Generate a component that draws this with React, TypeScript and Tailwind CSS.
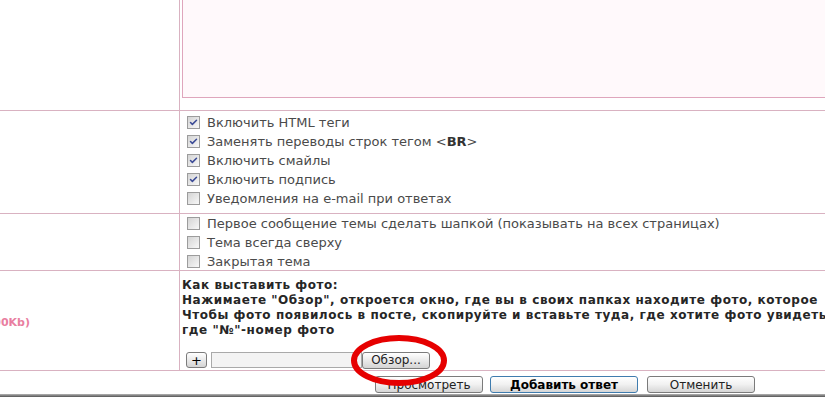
import { Check } from 'lucide-react';

const line = 'border-[#d9b2c1]';

function Box({ checked }: { checked: boolean }) {
  return (
    <span className="w-[13px] h-[13px] border border-[#9c9c9c] bg-gradient-to-br from-[#d4d4d4] to-[#f8f8f8] flex items-center justify-center shrink-0">
      {checked && <Check className="w-[9px] h-[9px] text-[#3a4a96]" strokeWidth={4} />}
    </span>
  );
}

function Option({ label, checked }: { label: React.ReactNode; checked?: boolean }) {
  return (
    <div className="h-[19px] flex items-center gap-[7px] pl-[7px]">
      <Box checked={!!checked} />
      <span className="text-[13px] text-[#4a4a4a] whitespace-nowrap">{label}</span>
    </div>
  );
}

function Btn({ children, primary, className }: { children: React.ReactNode; primary?: boolean; className: string }) {
  return (
    <button
      className={`${className} h-[17px] rounded-[3px] border text-[12px] leading-none bg-gradient-to-b from-white via-[#f1f1f1] to-[#d6d6d6] ${
        primary ? 'border-[#3f7cae] font-bold text-black' : 'border-[#7b7b7b] text-[#222]'
      }`}
    >
      {children}
    </button>
  );
}

export default function App() {
  return (
    <div className="w-[825px] h-[397px] overflow-hidden bg-white relative font-['DejaVu_Sans',sans-serif] flex flex-col">
      {/* message body */}
      <div className={`flex h-[111px] border-b ${line}`}>
        <div className={`w-[180px] border-r ${line} shrink-0`} />
        <div className="flex-1 pl-[2px]">
          <div className="h-[98px] w-[700px] border-l border-b border-[#dfa6bc] bg-[#fff9fb]" />
        </div>
      </div>

      {/* options */}
      <div className={`flex h-[103px] border-b ${line}`}>
        <div className={`w-[180px] border-r ${line} shrink-0`} />
        <div className="flex-1 pt-[2px]">
          <Option checked label="Включить HTML теги" />
          <Option checked label={<>Заменять переводы строк тегом &lt;<b className="text-[#333]">BR</b>&gt;</>} />
          <Option checked label="Включить смайлы" />
          <Option checked label="Включить подпись" />
          <Option label="Уведомления на e-mail при ответах" />
        </div>
      </div>

      <div className={`flex h-[57px] border-b ${line}`}>
        <div className={`w-[180px] border-r ${line} shrink-0`} />
        <div className="flex-1">
          <Option label="Первое сообщение темы сделать шапкой (показывать на всех страницах)" />
          <Option label="Тема всегда сверху" />
          <Option label="Закрытая тема" />
        </div>
      </div>

      {/* photo */}
      <div className={`flex h-[100px] border-b ${line}`}>
        <div className={`w-[180px] border-r ${line} shrink-0 flex items-center`}>
          <div className="w-[30px] overflow-hidden flex justify-end mt-[5px]">
            <span className="whitespace-nowrap text-[11px] font-bold text-[#e97ea0]">Фото (макс. 500Kb)</span>
          </div>
        </div>
        <div className="flex-1 pt-[7px] pl-[2px] overflow-hidden">
          <div className="text-[12px] leading-[15px] font-bold tracking-[0.55px] text-[#262626] whitespace-nowrap">
            <div>Как выставить фото:</div>
            <div>Нажимаете "Обзор", откроется окно, где вы в своих папках находите фото, которое</div>
            <div>Чтобы фото появилось в посте, скопируйте и вставьте туда, где хотите фото увидеть</div>
            <div>где "№"-номер фото</div>
          </div>
          <div className="flex items-center mt-[14px] pl-[4px] h-[16px]">
            <button className="w-[21px] h-[16px] rounded-[3px] border border-[#7b7b7b] bg-gradient-to-b from-white to-[#d4d4d4] text-[13px] leading-none text-black">
              +
            </button>
            <div className="ml-[4px] w-[151px] h-[16px] border border-[#a9a9a9] bg-[#f3f3f3]" />
            <button className="w-[68px] h-[17px] rounded-[3px] border border-[#7b7b7b] bg-gradient-to-b from-white to-[#d4d4d4] text-[12px] leading-none text-[#222]">
              Обзор...
            </button>
          </div>
        </div>
      </div>

      {/* actions */}
      <div className="flex-1 flex items-start pt-[5px] pl-[375px]">
        <Btn className="w-[108px]">Просмотреть</Btn>
        <Btn primary className="w-[148px] ml-[7px]">Добавить ответ</Btn>
        <Btn className="w-[108px] ml-[9px]">Отменить</Btn>
      </div>
      <div className="h-[3px] bg-gradient-to-b from-[#b5b5b5] to-[#555]" />

      {/* red marker */}
      <svg className="absolute left-[349px] top-[334px] pointer-events-none" width="100" height="53" viewBox="0 0 100 53">
        <ellipse cx="50" cy="26.5" rx="45" ry="22.5" fill="none" stroke="#e60000" strokeWidth="6" />
      </svg>
    </div>
  );
}
